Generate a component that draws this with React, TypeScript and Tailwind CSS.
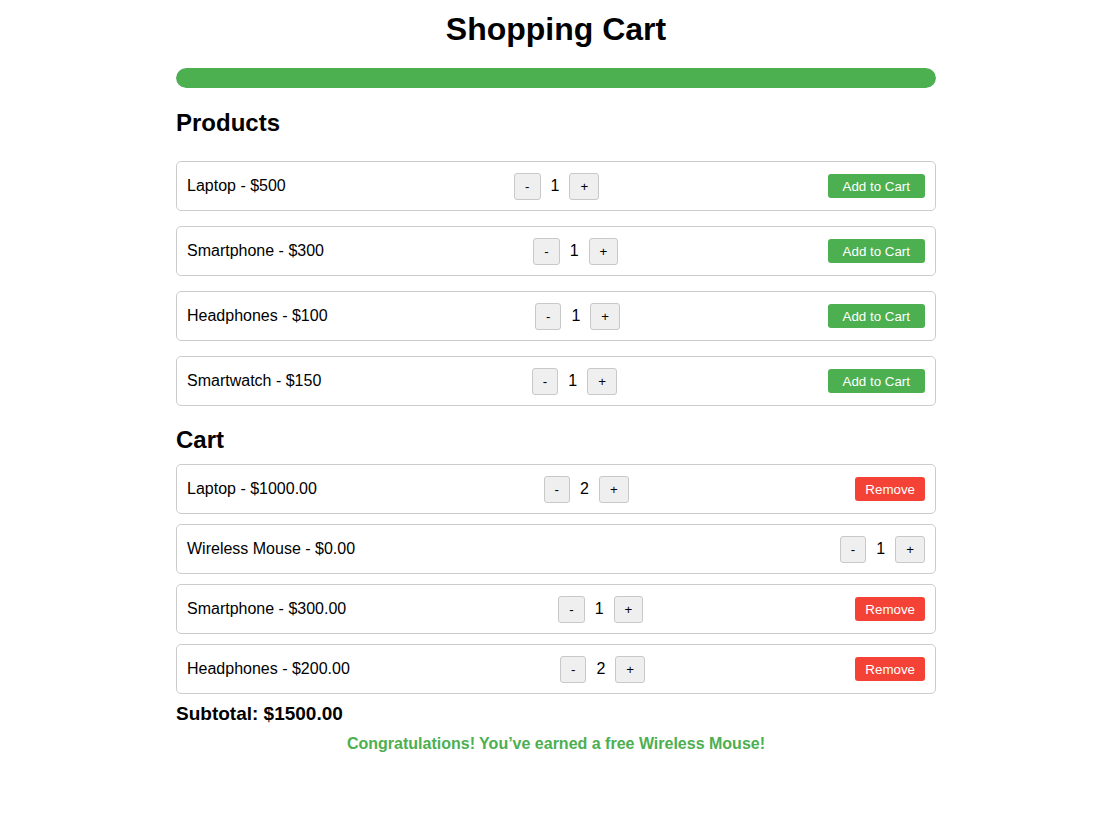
import React from "react";

const font = { fontFamily: '"Liberation Sans", Arial, sans-serif' };

function Qty({ n }: { n: number }) {
  return (
    <div className="flex items-center">
      <button className="h-[27px] px-[10px] bg-[#efefef] border border-[#c8c8c8] rounded-[3px] text-[13.33px] leading-[15px] text-black">
        -
      </button>
      <span className="mx-[10px] text-[16px]">{n}</span>
      <button className="h-[27px] px-[10px] bg-[#efefef] border border-[#c8c8c8] rounded-[3px] text-[13.33px] leading-[15px] text-black">
        +
      </button>
    </div>
  );
}

function Row({ name, n, kind }: { name: string; n: number; kind: "add" | "remove" | "none" }) {
  return (
    <div className="h-[50px] flex items-center justify-between border border-[#cccccc] rounded-[5px] px-[10px]">
      <span className="text-[16px]">{name}</span>
      <Qty n={n} />
      {kind === "add" && (
        <button className="h-[24px] px-[15px] bg-[#4caf50] text-white rounded-[3px] text-[13.33px] leading-[15px]">
          Add to Cart
        </button>
      )}
      {kind === "remove" && (
        <button className="h-[24px] px-[10px] bg-[#f44336] text-white rounded-[3px] text-[13.33px] leading-[15px]">
          Remove
        </button>
      )}
    </div>
  );
}

export default function App() {
  return (
    <div className="min-h-[820px] bg-white text-black" style={font}>
      <div className="ml-[176px] w-[760px] pt-[11px]">
        <h1 className="text-[32px] leading-[37px] font-bold text-center">Shopping Cart</h1>
        <div className="mt-[20px] h-[20px] bg-[#dddddd] rounded-[10px] overflow-hidden">
          <div className="h-full w-full bg-[#4caf50] rounded-[10px]" />
        </div>
        <h2 className="mt-[21px] text-[24px] leading-[28px] font-bold">Products</h2>
        <div className="mt-[24px] flex flex-col gap-[15px]">
          <Row name="Laptop - $500" n={1} kind="add" />
          <Row name="Smartphone - $300" n={1} kind="add" />
          <Row name="Headphones - $100" n={1} kind="add" />
          <Row name="Smartwatch - $150" n={1} kind="add" />
        </div>
        <h2 className="mt-[20px] text-[24px] leading-[28px] font-bold">Cart</h2>
        <div className="mt-[10px] flex flex-col gap-[10px]">
          <Row name="Laptop - $1000.00" n={2} kind="remove" />
          <Row name="Wireless Mouse - $0.00" n={1} kind="none" />
          <Row name="Smartphone - $300.00" n={1} kind="remove" />
          <Row name="Headphones - $200.00" n={2} kind="remove" />
        </div>
        <h3 className="mt-[9px] text-[19px] leading-[22px] font-bold">Subtotal: $1500.00</h3>
        <p className="mt-[10px] text-[16px] leading-[18px] font-bold text-center text-[#4caf50]">
          Congratulations! You’ve earned a free Wireless Mouse!
        </p>
      </div>
    </div>
  );
}
